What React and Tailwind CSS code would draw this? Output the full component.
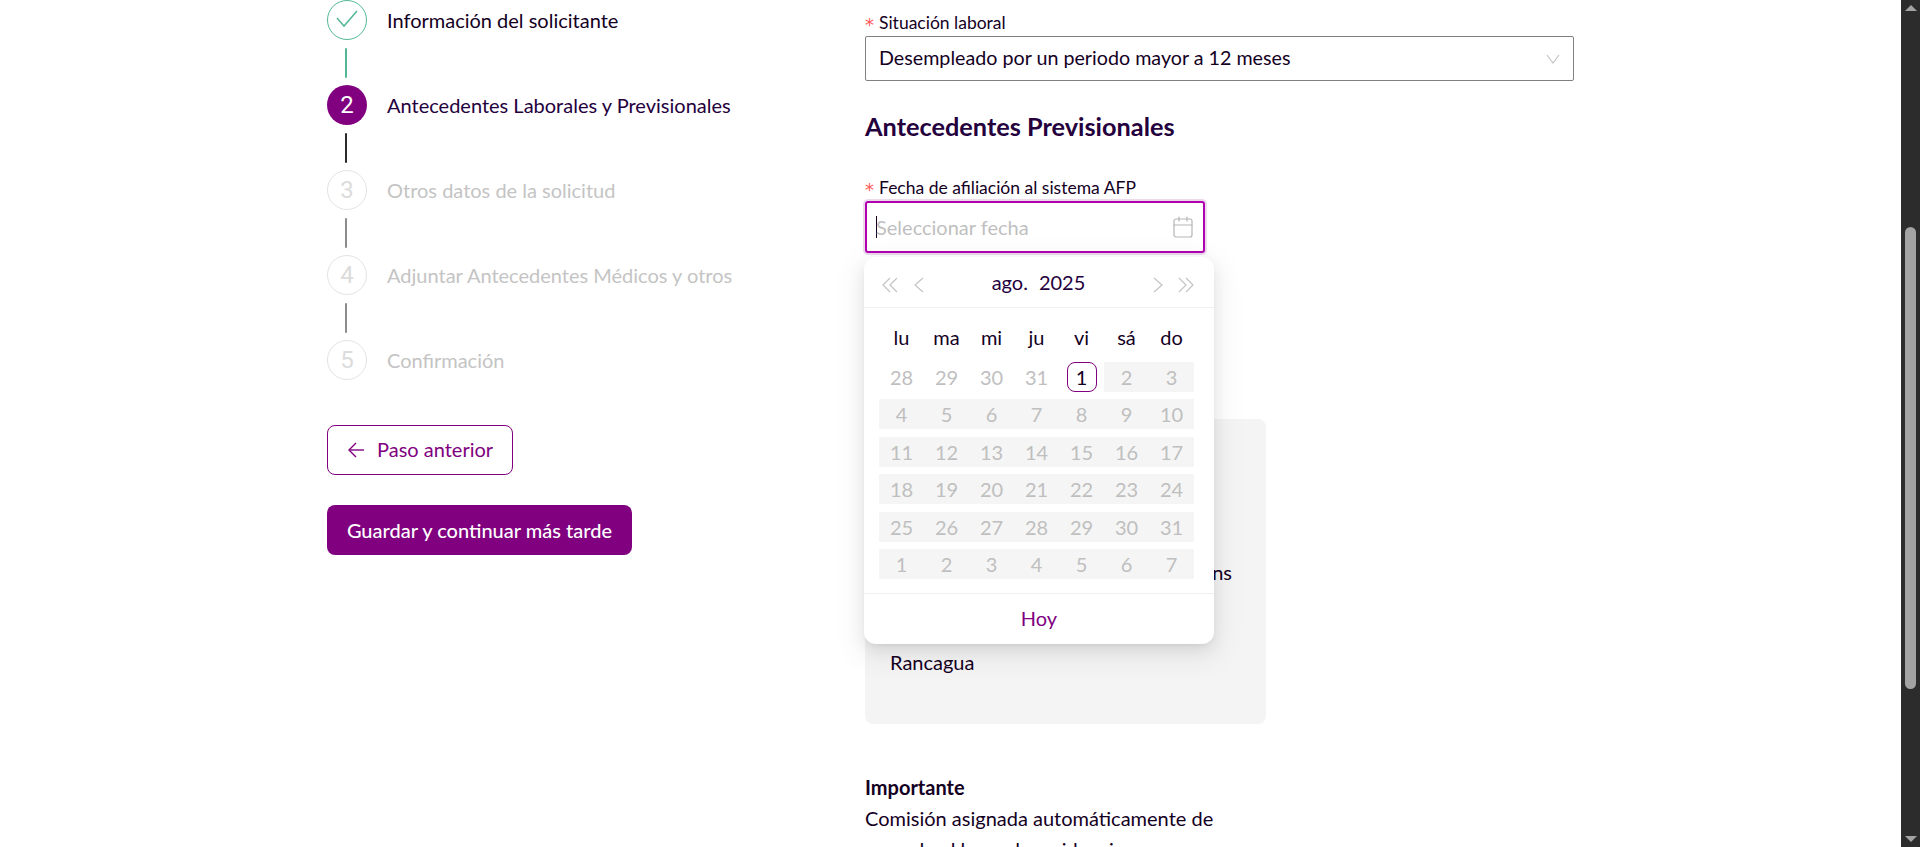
import React from "react";
import { Calendar } from "lucide-react";

const steps = [
  { n: 1, label: "Información del solicitante", state: "done" },
  { n: 2, label: "Antecedentes Laborales y Previsionales", state: "active" },
  { n: 3, label: "Otros datos de la solicitud", state: "off" },
  { n: 4, label: "Adjuntar Antecedentes Médicos y otros", state: "off" },
  { n: 5, label: "Confirmación", state: "off" },
];

const weekDays = ["lu", "ma", "mi", "ju", "vi", "sá", "do"];

const weeks = [
  [28, 29, 30, 31, 1, 2, 3],
  [4, 5, 6, 7, 8, 9, 10],
  [11, 12, 13, 14, 15, 16, 17],
  [18, 19, 20, 21, 22, 23, 24],
  [25, 26, 27, 28, 29, 30, 31],
  [1, 2, 3, 4, 5, 6, 7],
];

const Chevron = ({ points }) => (
  <svg width="16" height="16" viewBox="0 0 16 16" fill="none" stroke="#c4c4c4" strokeWidth="1.2" className="mt-[5px]">
    {points.map((p) => (
      <polyline key={p} points={p} />
    ))}
  </svg>
);

const StepRow = ({ step, last }) => {
  const line =
    step.state === "done" ? "bg-[#52b795]" : step.state === "active" ? "bg-[#2b2b2b]" : "bg-[#8c8c8c]";
  return (
    <div className="flex flex-col">
      <div className="flex items-center gap-5 h-10">
        {step.state === "done" && (
          <div className="w-10 h-10 rounded-full border border-[#52b795] flex items-center justify-center">
            <svg width="22" height="18" viewBox="0 0 22 18" fill="none" stroke="#52b795" strokeWidth="1.5" className="-mt-[2px]">
              <polyline points="1,8 8,16 21,1" />
            </svg>
          </div>
        )}
        {step.state === "active" && (
          <div className="w-10 h-10 rounded-full bg-[#800080] text-white text-[24px] font-['Roboto'] flex items-center justify-center">
            {step.n}
          </div>
        )}
        {step.state === "off" && (
          <div className="w-10 h-10 rounded-full border border-[#e3e3e3] text-[#dcdcdc] text-[24px] font-['Roboto'] flex items-center justify-center">
            {step.n}
          </div>
        )}
        <span
          className={
            "text-[20px] " +
            (step.state === "off" ? "text-[#c4c4c4]" : step.state === "active" ? "text-[#24003d]" : "text-[#14001f]")
          }
        >
          {step.label}
        </span>
      </div>
      {!last && <div className={"w-[2px] h-[30px] ml-[18px] my-[7.5px] rounded-sm " + line}></div>}
    </div>
  );
};

const DatePopup = () => (
  <div className="absolute left-[-1px] top-[56px] w-[350px] h-[387px] bg-white rounded-xl shadow-[0_6px_16px_0_rgba(0,0,0,0.08),0_3px_6px_-4px_rgba(0,0,0,0.12),0_9px_28px_8px_rgba(0,0,0,0.05)] flex flex-col z-10">
    <div className="h-[51px] shrink-0 border-b border-[#f0f0f0] flex items-center justify-between pl-[18px] pr-[20px]">
      <div className="flex items-center gap-[13px]">
        <Chevron points={["8,1 1,8 8,15", "15,1 8,8 15,15"]} />
        <Chevron points={["12,1 4,8 12,15"]} />
      </div>
      <div className="flex gap-[11px] text-[20px] text-[#24003d] -mt-[1px]">
        <span>ago.</span>
        <span>2025</span>
      </div>
      <div className="flex items-center gap-[12px]">
        <Chevron points={["4,1 12,8 4,15"]} />
        <Chevron points={["1,1 8,8 1,15", "8,1 15,8 8,15"]} />
      </div>
    </div>
    <div className="flex-1 pl-[15px] pr-[20px] pt-[14px]">
      <div className="grid grid-cols-7 h-[30px] mb-[10px] text-[20px] text-[#14001f]">
        {weekDays.map((d) => (
          <div key={d} className="flex items-center justify-center">
            {d}
          </div>
        ))}
      </div>
      <div className="flex flex-col gap-y-[7.4px]">
        {weeks.map((week, i) => (
          <div key={i} className="grid grid-cols-7 h-[30px] text-[20px] text-[#bfbfbf]">
            {week.map((d, j) => {
              if (i === 0 && j === 4) {
                return (
                  <div key={j} className="flex items-center justify-center">
                    <div className="w-[30px] h-[30px] border border-[#800080] rounded-lg text-[#14001f] flex items-center justify-center">
                      {d}
                    </div>
                  </div>
                );
              }
              const grey = i > 0 || j > 4;
              return (
                <div key={j} className={"flex items-center justify-center " + (grey ? "bg-[#f5f5f5]" : "")}>
                  {d}
                </div>
              );
            })}
          </div>
        ))}
      </div>
    </div>
    <div className="h-[51px] shrink-0 border-t border-[#f0f0f0] pb-[2px] flex items-center justify-center text-[20px] text-[#800080]">
      Hoy
    </div>
  </div>
);

const Scrollbar = () => (
  <div className="w-[19px] shrink-0 h-full bg-[#2c2c2c] flex flex-col items-center">
    <svg width="14" height="10" viewBox="0 0 14 10" className="mt-[4px]">
      <polygon points="7,1 13,7 1,7" fill="#a3a3a3" />
    </svg>
    <div className="w-[11px] h-[462px] mt-[213px] rounded-md bg-[#a3a3a3]"></div>
    <svg width="14" height="10" viewBox="0 0 14 10" className="mt-auto mb-[4px]">
      <polygon points="1,3 13,3 7,9" fill="#a3a3a3" />
    </svg>
  </div>
);

const Required = () => (
  <span className="text-[#ff5a5a] w-[14px] text-[18px] font-['DejaVu_Sans'] mt-[4px]">*</span>
);

export default function App() {
  return (
    <div className="h-screen w-full flex overflow-hidden bg-white font-['Lato','Liberation_Sans',sans-serif]">
      <div className="flex-1 flex pl-[327px] overflow-hidden">
        <div className="w-[538px] shrink-0">
          <div>
            {steps.map((s, i) => (
              <StepRow key={s.n} step={s} last={i === steps.length - 1} />
            ))}
          </div>
          <button className="mt-[45px] h-[50px] w-[186px] border border-[#800080] rounded-lg text-[#800080] text-[20px] pl-[20px] flex items-center gap-[13px]">
            <svg width="16" height="16" viewBox="0 0 16 16" fill="none" stroke="#800080" strokeWidth="1.4">
              <polyline points="8,1 1,8 8,15" />
              <line x1="1" y1="8" x2="16" y2="8" />
            </svg>
            <span className="-mt-[2px]">Paso anterior</span>
          </button>
          <button className="mt-[30px] h-[50px] w-[305px] bg-[#800080] rounded-lg text-white text-[20px] font-medium flex items-center justify-center">
            Guardar y continuar más tarde
          </button>
        </div>

        <div className="w-[709px] shrink-0 pt-[11px]">
          <div className="h-[24px] leading-[24px] text-[17.5px] text-[#14001f] flex items-center">
            <Required />
            Situación laboral
          </div>
          <div className="mt-[1px] h-[45px] border border-[#808080] rounded-[2px] pl-[13px] pr-[13px] flex items-center justify-between text-[19.7px] text-[#14001f]">
            <span className="-mt-[2px]">Desempleado por un periodo mayor a 12 meses</span>
            <svg width="14" height="10" viewBox="0 0 14 10" fill="none" stroke="#c4c4c4" strokeWidth="1.2">
              <polyline points="1,1 7,9 13,1" />
            </svg>
          </div>
          <h2 className="mt-[28px] text-[25.3px] leading-[34px] font-bold text-[#24003d]">
            Antecedentes Previsionales
          </h2>
          <div className="mt-[33px] h-[24px] leading-[24px] text-[17.5px] text-[#14001f] flex items-center">
            <Required />
            Fecha de afiliación al sistema AFP
          </div>
          <div className="relative w-[340px] mt-[1px]">
            <div className="h-[52px] border-2 border-[#b000b0] rounded-[3px] shadow-[0_0_0_2px_rgba(128,0,128,0.15)] pl-[9px] pr-[8px] flex items-center justify-between text-[20px]">
              <div className="flex items-center -mt-[1px]">
                <span className="w-px h-[22px] bg-[#14001f] -mr-px"></span>
                <span className="text-[#bfbfbf]">Seleccionar fecha</span>
              </div>
              <Calendar size={24} strokeWidth={1.2} className="text-[#b5b5b5]" />
            </div>
            <DatePopup />
          </div>
          <div className="mt-[166px] w-[401px] h-[305px] bg-[#f4f4f4] rounded-lg pl-[25px] pr-[34px] pt-[139px] text-[20px] text-[#14001f]">
            <div className="text-right leading-[28px]">ns</div>
            <div className="mt-[62px] leading-[28px]">Rancagua</div>
          </div>
          <div className="mt-[48px] w-[401px] text-[20px] leading-[31px] text-[#14001f]">
            <div className="font-bold">Importante</div>
            <div>Comisión asignada automáticamente de acuerdo al lugar de residencia</div>
          </div>
        </div>
      </div>
      <Scrollbar />
    </div>
  );
}
